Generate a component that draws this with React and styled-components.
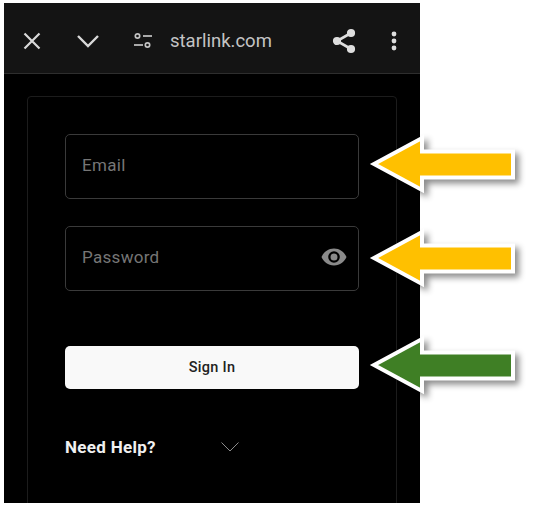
import React from "react";
import styled, { createGlobalStyle } from "styled-components";

const GlobalStyle = createGlobalStyle`
  html, body {
    margin: 0;
    background: #fff;
    font-family: Roboto, "Liberation Sans", sans-serif;
  }
`;

const Page = styled.div`
  position: relative;
  width: 536px;
  height: 506px;
  padding: 3px 0 0 4px;
  box-sizing: border-box;
  overflow: hidden;
`;

const Phone = styled.div`
  width: 416px;
  height: 500px;
  background: #000;
  display: flex;
  flex-direction: column;
  overflow: hidden;
`;

const Toolbar = styled.div`
  height: 71px;
  flex: none;
  box-sizing: border-box;
  background: #141414;
  border-bottom: 1px solid #2e2e2e;
  display: flex;
  align-items: center;
  padding: 5px 23px 0 18px;
  color: #d9d9d9;
`;

const ToolIcon = styled.svg`
  flex: none;
  display: block;
  margin-left: ${(props) => props.$gap || 0}px;
`;

const Url = styled.span`
  margin-left: 17px;
  font-size: 18.5px;
  color: #c4c4c4;
  flex: 1;
`;

const Content = styled.div`
  flex: 1;
  padding: 22px 23px 0;
`;

const Card = styled.div`
  height: 100%;
  box-sizing: content-box;
  border: 1px solid #1c1c1c;
  border-radius: 4px;
  padding: 37px 37px 0;
  display: flex;
  flex-direction: column;
`;

const Field = styled.div`
  height: ${(props) => props.$height}px;
  box-sizing: border-box;
  border: 1px solid #3a3a3a;
  border-radius: 5px;
  display: flex;
  align-items: center;
  justify-content: space-between;
  padding: 0 11px 3px 16px;
  margin-bottom: ${(props) => props.$after}px;
  font-size: 17px;
  letter-spacing: 0.3px;
  color: #767676;
`;

const SignIn = styled.button`
  height: 43px;
  border: 0;
  border-radius: 5px;
  background: #f9f9f9;
  color: #222;
  font-family: inherit;
  font-size: 14.5px;
  font-weight: 500;
  letter-spacing: 0.3px;
  padding: 0;
`;

const HelpRow = styled.div`
  display: flex;
  align-items: center;
  margin-top: 48px;
  color: #f0f0f0;
  font-size: 17px;
  font-weight: 700;
  letter-spacing: 0.3px;
`;

const HelpChevron = styled.svg`
  margin-left: 65px;
  display: block;
`;

const ArrowMark = styled.svg`
  position: absolute;
  left: 368px;
  top: ${(props) => props.$top}px;
  overflow: visible;
  filter: drop-shadow(4px 4px 3px rgba(0, 0, 0, 0.45));
`;

const Arrow = ({ top, color }) => (
  <ArrowMark $top={top} width="150" height="64" viewBox="0 0 150 64">
    <path
      d="M6 32 L54 6 L54 19.5 L145 19.5 L145 45.5 L54 45.5 L54 58 Z"
      fill={color}
      stroke="#fff"
      strokeWidth="4"
      strokeLinejoin="miter"
    />
  </ArrowMark>
);

export default function App() {
  return (
    <Page>
      <GlobalStyle />
      <Phone>
        <Toolbar>
          <ToolIcon width="20" height="20" viewBox="0 0 20 20" fill="none" stroke="currentColor" strokeWidth="2.2">
            <path d="M2.5 2.5 L17.5 17.5 M17.5 2.5 L2.5 17.5" />
          </ToolIcon>
          <ToolIcon $gap={34} width="24" height="16" viewBox="0 0 24 16" fill="none" stroke="currentColor" strokeWidth="2.4">
            <path d="M2 3 L12 13 L22 3" />
          </ToolIcon>
          <ToolIcon $gap={33} width="20" height="18" viewBox="0 0 20 18" fill="none" stroke="#c4c4c4" strokeWidth="1.7">
            <circle cx="4.5" cy="4" r="2.2" />
            <path d="M10 4 H19" />
            <circle cx="14.5" cy="13" r="2.2" />
            <path d="M1 13 H10" />
          </ToolIcon>
          <Url>starlink.com</Url>
          <ToolIcon width="24" height="26" viewBox="0 0 24 26" fill="#dedede" stroke="#dedede" strokeWidth="1.8">
            <path d="M19 5 L5 13 L19 21" fill="none" strokeWidth="2.6" />
            <circle cx="19" cy="5" r="3.2" />
            <circle cx="5" cy="13" r="3.2" />
            <circle cx="19" cy="21" r="3.2" />
          </ToolIcon>
          <ToolIcon $gap={35} width="6" height="20" viewBox="0 0 6 20" fill="#dedede">
            <circle cx="3" cy="3" r="2.4" />
            <circle cx="3" cy="10" r="2.4" />
            <circle cx="3" cy="17" r="2.4" />
          </ToolIcon>
        </Toolbar>
        <Content>
          <Card>
            <Field $height={65} $after={27}>Email</Field>
            <Field $height={65} $after={55}>
              Password
              <svg width="26" height="18" viewBox="0 0 26 18">
                <path
                  fillRule="evenodd"
                  fill="#8a8a8a"
                  d="M13 0.5 C19 0.5 23.5 4.5 25.5 9 C23.5 13.5 19 17.5 13 17.5 C7 17.5 2.5 13.5 0.5 9 C2.5 4.5 7 0.5 13 0.5 Z M13 3.2 A5.8 5.8 0 1 0 13 14.8 A5.8 5.8 0 1 0 13 3.2 Z M13 5.5 A3.5 3.5 0 1 1 13 12.5 A3.5 3.5 0 1 1 13 5.5 Z"
                />
              </svg>
            </Field>
            <SignIn>Sign In</SignIn>
            <HelpRow>
              Need Help?
              <HelpChevron width="18" height="12" viewBox="0 0 18 12" fill="none" stroke="#8c8c8c" strokeWidth="1">
                <path d="M0.5 1.5 L9 10 L17.5 1.5" />
              </HelpChevron>
            </HelpRow>
          </Card>
        </Content>
      </Phone>
      <Arrow top={132} color="#ffc000" />
      <Arrow top={226} color="#ffc000" />
      <Arrow top={333} color="#3f7f25" />
    </Page>
  );
}
